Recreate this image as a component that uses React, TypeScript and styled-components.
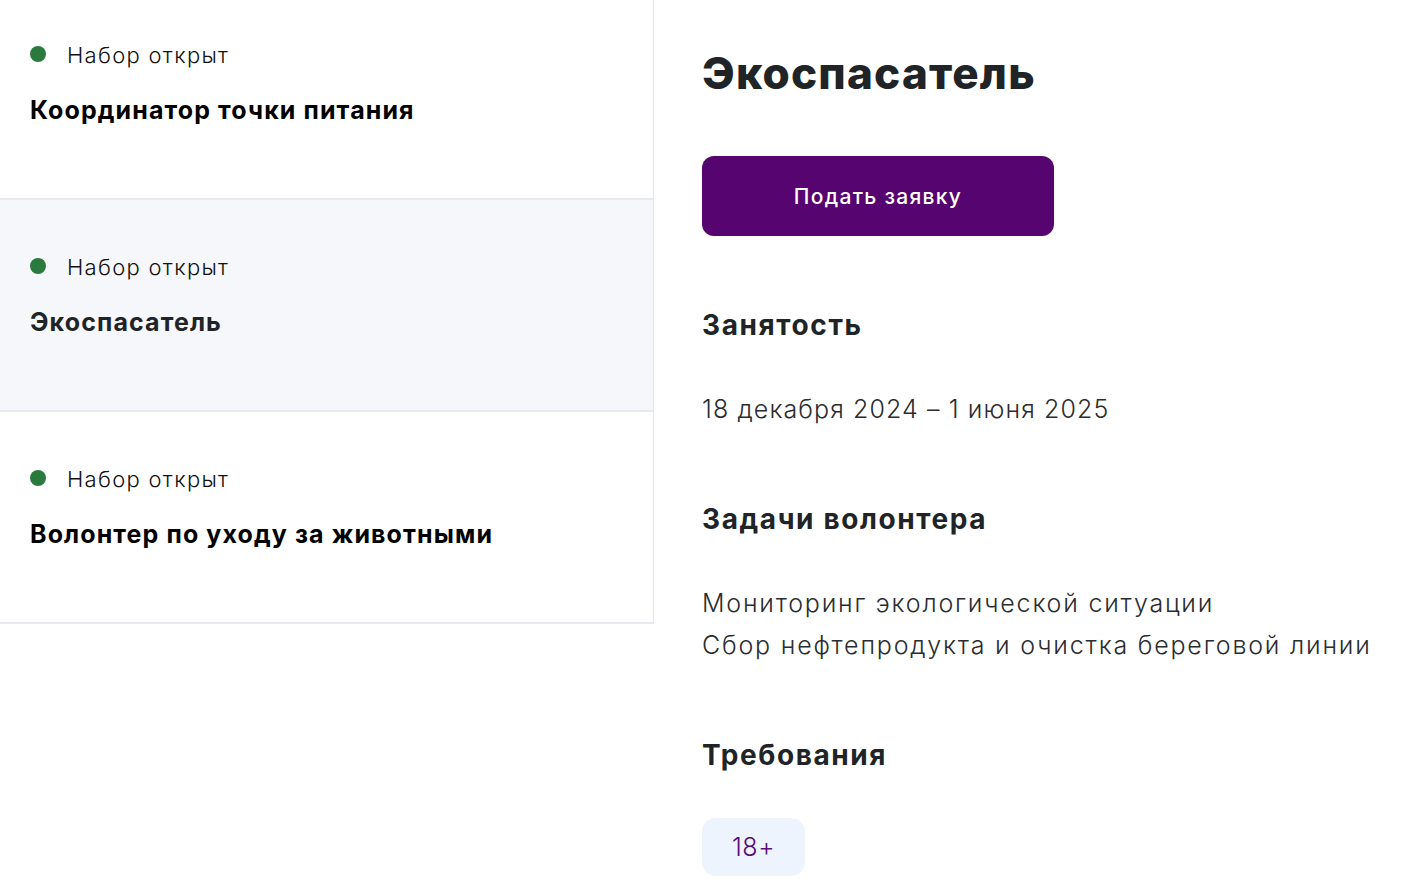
import styled, { createGlobalStyle } from 'styled-components';

type Vacancy = { id: number; status: string; title: string; active?: boolean };

const vacancies: Vacancy[] = [
  { id: 1, status: 'Набор открыт', title: 'Координатор точки питания' },
  { id: 2, status: 'Набор открыт', title: 'Экоспасатель', active: true },
  { id: 3, status: 'Набор открыт', title: 'Волонтер по уходу за животными' },
];

const tasks = ['Мониторинг экологической ситуации', 'Сбор нефтепродукта и очистка береговой линии'];

const App = () => {
  return (
    <>
      <GlobalStyle />
      <Page>
        <ListColumn>
          <List>
            {vacancies.map((v) => (
              <Item key={v.id} $active={v.active}>
                <Status>
                  <Dot />
                  <StatusText>{v.status}</StatusText>
                </Status>
                <ItemTitle $active={v.active}>{v.title}</ItemTitle>
              </Item>
            ))}
          </List>
        </ListColumn>
        <Details>
          <Heading>Экоспасатель</Heading>
          <ApplyButton>Подать заявку</ApplyButton>
          <Section>
            <SectionTitle>Занятость</SectionTitle>
            <DateText>18 декабря 2024 – 1 июня 2025</DateText>
          </Section>
          <Section>
            <SectionTitle>Задачи волонтера</SectionTitle>
            <div>
              {tasks.map((t) => (
                <BodyText key={t}>{t}</BodyText>
              ))}
            </div>
          </Section>
          <Section>
            <SectionTitle>Требования</SectionTitle>
            <Tags>
              <Tag>18+</Tag>
            </Tags>
          </Section>
        </Details>
      </Page>
    </>
  );
};

export default App;

const GlobalStyle = createGlobalStyle`
  * { box-sizing: border-box; }
  html, body {
    margin: 0;
    background: #ffffff;
    font-family: "Inter", "Noto Sans", sans-serif;
    overflow: hidden;
  }
  p, h1, h2 { margin: 0; }
`;

const Page = styled.div`
  display: grid;
  grid-template-columns: 654px 1fr;
  height: 896px;
  overflow: hidden;
`;

const ListColumn = styled.div`
  align-self: start;
  overflow: hidden;
`;

const List = styled.div`
  display: flex;
  flex-direction: column;
  margin-top: -12px;
  border-right: 1px solid #e4e6eb;
`;

const Item = styled.div<{ $active?: boolean }>`
  height: 212px;
  padding: 49px 30px 0;
  background: ${(p) => (p.$active ? '#f5f7fa' : '#ffffff')};
  border-bottom: 2px solid #e7e9ee;
`;

const Status = styled.div`
  display: flex;
  align-items: center;
  height: 36px;
`;

const Dot = styled.span`
  width: 16px;
  height: 16px;
  border-radius: 50%;
  background: #2b7a3d;
  margin-right: 21px;
  margin-top: -2px;
`;

const StatusText = styled.span`
  font-size: 22px;
  font-weight: 300;
  letter-spacing: 1.3px;
  color: #111111;
`;

const ItemTitle = styled.p<{ $active?: boolean }>`
  margin-top: 19px;
  font-size: 25px;
  line-height: 36px;
  font-weight: 700;
  letter-spacing: 1.1px;
  color: ${(p) => (p.$active ? '#212427' : '#000000')};
`;

const Details = styled.div`
  padding: 44px 0 0 48px;
  display: flex;
  flex-direction: column;
  align-items: flex-start;
`;

const Heading = styled.h1`
  font-size: 44px;
  line-height: 58px;
  font-weight: 800;
  letter-spacing: 1.2px;
  color: #212427;
`;

const ApplyButton = styled.button`
  margin-top: 54px;
  width: 352px;
  height: 80px;
  border: none;
  border-radius: 12px;
  background: #56046f;
  color: #ffffff;
  font-family: inherit;
  font-size: 21px;
  font-weight: 500;
  letter-spacing: 1.3px;
  cursor: pointer;
`;

const Section = styled.section`
  margin-top: 69px;
  display: flex;
  flex-direction: column;
  gap: 43px;
`;

const SectionTitle = styled.h2`
  font-size: 28px;
  line-height: 40px;
  font-weight: 700;
  letter-spacing: 1.6px;
  color: #212427;
`;

const BodyText = styled.p`
  font-size: 25px;
  line-height: 42px;
  font-weight: 300;
  letter-spacing: 1.8px;
  color: #2a2c30;
`;

const DateText = styled(BodyText)`
  letter-spacing: 1.1px;
`;

const Tags = styled.div`
  display: flex;
  gap: 12px;
`;

const Tag = styled.span`
  display: inline-flex;
  align-items: center;
  justify-content: center;
  width: 103px;
  height: 58px;
  border-radius: 14px;
  background: #eef4fe;
  color: #5a0a78;
  font-size: 25px;
  font-weight: 300;
  letter-spacing: 0.5px;
`;
